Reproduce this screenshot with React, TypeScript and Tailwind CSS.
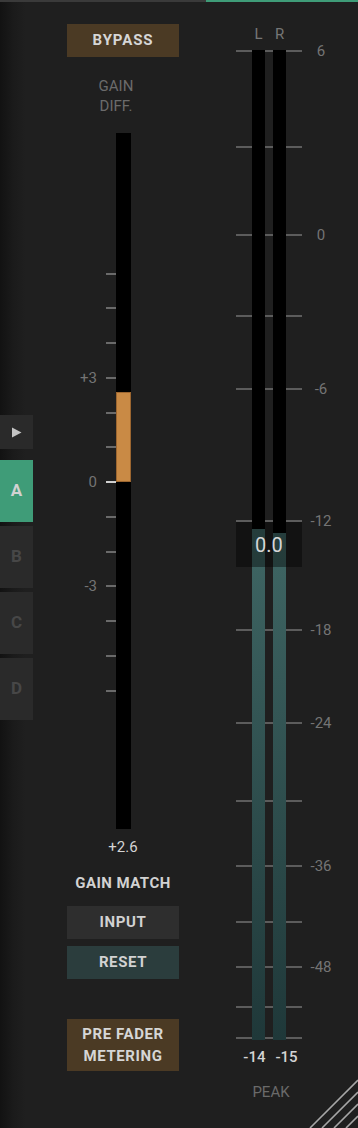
import React from "react";

const FONT = { fontFamily: "Roboto, 'Noto Sans', 'Liberation Sans', sans-serif" };

const GAIN_ZERO = 349;
const GAIN_STEP = 34.75;
const gainTicks = [-6, -5, -4, -3, -2, -1, 0, 1, 2, 3, 4, 5, 6];
const gainLabels: { v: number; t: string }[] = [
  { v: 3, t: "+3" },
  { v: 0, t: "0" },
  { v: -3, t: "-3" },
];
const gainValue = 2.6;

const meterTicks = [1, 97, 185, 266, 339, 471, 580, 673, 751, 816, 872, 917, 957, 988];
const meterLabels: { y: number; t: string }[] = [
  { y: 1, t: "6" },
  { y: 185, t: "0" },
  { y: 339, t: "-6" },
  { y: 471, t: "-12" },
  { y: 580, t: "-18" },
  { y: 673, t: "-24" },
  { y: 816, t: "-36" },
  { y: 917, t: "-48" },
];

function Tab({ children, active, h }: { children: React.ReactNode; active?: boolean; h: number }) {
  return (
    <div
      className={
        "w-[33px] flex items-center justify-center font-bold text-[17px] " +
        (active ? "bg-[#3f9c78] text-[#d2d2d2]" : "bg-[#2a2a2a] text-[#474747]")
      }
      style={{ height: h }}
    >
      {children}
    </div>
  );
}

function Meter({ fillTop }: { fillTop: number }) {
  return (
    <div className="w-[13px] h-full bg-black relative">
      <div
        className="absolute left-0 right-0 bottom-0 bg-[linear-gradient(to_bottom,#3f6664,#1f3839)]"
        style={{ top: fillTop }}
      />
    </div>
  );
}

export default function App() {
  return (
    <div
      className="w-[358px] h-[1128px] relative overflow-hidden bg-[linear-gradient(to_right,#121212,#1b1b1b_14px,#1f1f1f_26px)] text-[#d2d2d2]"
      style={FONT}
    >
      <div className="flex h-[2px]">
        <div className="w-[206px] bg-[#3a3a3a]" />
        <div className="flex-1 bg-[#3f9c78]" />
      </div>
      <div className="flex">
        {/* tabs */}
        <div className="w-[33px] pt-[413px] flex flex-col">
          <div className="h-[34px] w-[33px] bg-[#2a2a2a] flex items-center justify-center">
            <svg width="11" height="11" viewBox="0 0 11 11">
              <path d="M1 0.5 L10.5 5.5 L1 10.5 Z" fill="#c4c4c4" />
            </svg>
          </div>
          <div className="mt-[11px] flex flex-col gap-[4px]">
            <Tab active h={62}>A</Tab>
            <Tab h={62}>B</Tab>
            <Tab h={62}>C</Tab>
            <Tab h={62}>D</Tab>
          </div>
        </div>

        {/* center column */}
        <div className="ml-[34px] w-[112px] flex flex-col items-center">
          <div className="mt-[22px] w-[112px] h-[33px] bg-[#4b3a24] flex items-center justify-center font-bold text-[15px] tracking-[0.06em] text-[#d6d6d6]">
            BYPASS
          </div>
          <div className="mt-[19px] mr-[14px] text-[15px] leading-[20px] text-[#6b6b6b] text-center">
            GAIN
            <br />
            DIFF.
          </div>
          <div className="mt-[17px] h-[696px] w-[112px] flex justify-center">
            <div className="ml-[1px] w-[15px] h-full bg-black relative">
              {gainTicks.map((v) => (
                <div
                  key={v}
                  className={
                    "absolute right-[15px] w-[10px] h-[2px] " + (v === 0 ? "bg-[#d0d0d0]" : "bg-[#6a6a6a]")
                  }
                  style={{ top: GAIN_ZERO - v * GAIN_STEP - 1 }}
                />
              ))}
              {gainLabels.map((l) => (
                <div
                  key={l.t}
                  className="absolute right-[34px] text-[15px] leading-[20px] text-[#747474] -translate-y-1/2 whitespace-nowrap"
                  style={{ top: GAIN_ZERO - l.v * GAIN_STEP }}
                >
                  {l.t}
                </div>
              ))}
              <div
                className="absolute left-0 right-0 bg-[#c98a45] border border-[#9c6630]"
                style={{ top: GAIN_ZERO - gainValue * GAIN_STEP, height: gainValue * GAIN_STEP }}
              />
            </div>
          </div>
          <div className="mt-[8px] text-[15px] leading-[20px] text-[#d4d4d4]">+2.6</div>
          <div className="mt-[16px] text-[15px] leading-[20px] font-bold tracking-[0.03em] text-[#d2d2d2] whitespace-nowrap">
            GAIN MATCH
          </div>
          <div className="mt-[13px] w-[112px] h-[33px] bg-[#2e2e2e] flex items-center justify-center font-bold text-[15px] tracking-[0.04em] text-[#d2d2d2]">
            INPUT
          </div>
          <div className="mt-[7px] w-[112px] h-[33px] bg-[#2b3d3d] flex items-center justify-center font-bold text-[15px] tracking-[0.04em] text-[#d2d2d2]">
            RESET
          </div>
          <div className="mt-[40px] w-[112px] h-[52px] bg-[#4b3a24] flex flex-col items-center justify-center font-bold text-[15px] leading-[22px] tracking-[0.04em] text-[#d6d6d6]">
            <div>PRE FADER</div>
            <div>METERING</div>
          </div>
        </div>

        {/* meter column */}
        <div className="ml-[57px] w-[66px] flex flex-col">
          <div className="mt-[22px] h-[20px] flex pl-[16px] gap-[8px] text-[15px] leading-[20px] text-[#767676]">
            <span className="w-[13px] text-center">L</span>
            <span className="w-[13px] text-center">R</span>
          </div>
          <div className="mt-[6px] h-[990px] relative">
            {meterTicks.map((y) => (
              <div key={y} className="absolute left-0 right-0 h-[2px] bg-[#5c5c5c]" style={{ top: y - 1 }} />
            ))}
            <div className="relative h-full flex pl-[16px] gap-[8px]">
              <Meter fillTop={479} />
              <Meter fillTop={483} />
            </div>
            <div className="absolute left-0 right-0 top-[472px] h-[45px] bg-black/40 flex items-center justify-center text-[20px] text-[#d6d6d6]">
              0.0
            </div>
          </div>
          <div className="mt-[7px] h-[20px] flex justify-center gap-[10px] pl-[3px] text-[15px] leading-[20px] font-medium text-[#d4d4d4]">
            <span>-14</span>
            <span>-15</span>
          </div>
          <div className="mt-[15px] text-center pl-[4px] text-[15px] leading-[20px] text-[#6a6a6a]">PEAK</div>
        </div>

        {/* labels column */}
        <div className="w-[38px] flex flex-col">
          <div className="mt-[48px] h-[990px] relative">
            {meterLabels.map((l) => (
              <div
                key={l.t}
                className="absolute left-0 right-0 text-center text-[15px] leading-[20px] text-[#747474] -translate-y-1/2"
                style={{ top: l.y }}
              >
                {l.t}
              </div>
            ))}
          </div>
        </div>
      </div>

      <svg className="absolute right-0 bottom-0" width="50" height="50" viewBox="0 0 50 50">
        <g stroke="#a6a6a6" strokeWidth="1.6">
          <line x1="2" y1="50" x2="50" y2="2" />
          <line x1="14" y1="50" x2="50" y2="14" />
          <line x1="26" y1="50" x2="50" y2="26" />
          <line x1="38" y1="50" x2="50" y2="38" />
        </g>
      </svg>
    </div>
  );
}
